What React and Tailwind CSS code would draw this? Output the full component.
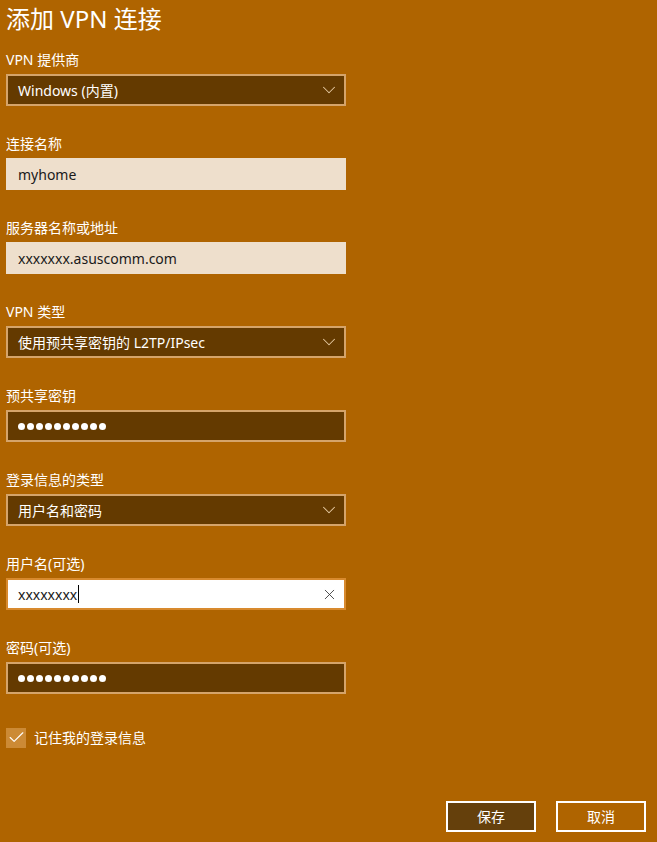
import { ChevronDown, X, Check } from 'lucide-react'

const FONT = { fontFamily: '"Noto Sans", "Noto Sans CJK SC", sans-serif' }

function Label({ children }) {
  return <div className="h-5 text-[14px] leading-5 text-white">{children}</div>
}

function Select({ value }) {
  return (
    <div className="mt-1 flex h-8 w-[340px] items-center justify-between border-2 border-[#d5a46a] bg-[#643a00] pl-[10px] pr-[4px] text-[14px] text-white">
      <span>{value}</span>
      <ChevronDown size={22} strokeWidth={1.1} className="text-[#e6c9a0]" />
    </div>
  )
}

function Light({ value }) {
  return (
    <div className="mt-1 flex h-8 w-[340px] items-center bg-[#eedfcc] px-3 text-[14px] text-[#1a1a1a]">
      {value}
    </div>
  )
}

function Dots() {
  return (
    <div className="mt-1 flex h-8 w-[340px] items-center gap-[2px] border-2 border-[#d5a46a] bg-[#643a00] pl-[10px]">
      {Array.from({ length: 10 }).map((_, i) => (
        <span key={i} className="h-[7px] w-[7px] rounded-full bg-white" />
      ))}
    </div>
  )
}

function Field({ label, children, first }) {
  return (
    <div className={first ? 'mt-3' : 'mt-7'}>
      <Label>{label}</Label>
      {children}
    </div>
  )
}

export default function App() {
  return (
    <div className="flex h-[842px] w-[657px] flex-col bg-[#af6400] px-[6px]" style={FONT}>
      <h1 className="h-[38px] text-[24px] leading-[38px] text-white">添加 VPN 连接</h1>

      <Field label="VPN 提供商" first>
        <Select value="Windows (内置)" />
      </Field>
      <Field label="连接名称">
        <Light value="myhome" />
      </Field>
      <Field label="服务器名称或地址">
        <Light value="xxxxxxx.asuscomm.com" />
      </Field>
      <Field label="VPN 类型">
        <Select value="使用预共享密钥的 L2TP/IPsec" />
      </Field>
      <Field label="预共享密钥">
        <Dots />
      </Field>
      <Field label="登录信息的类型">
        <Select value="用户名和密码" />
      </Field>
      <Field label="用户名(可选)">
        <div className="mt-1 flex h-8 w-[340px] items-center justify-between border-2 border-[#d88a2e] bg-white pl-[10px] pr-[6px] text-[14px] text-[#1a1a1a]">
          <span className="flex items-center">
            xxxxxxxx<span className="ml-[1px] h-[18px] w-px bg-black" />
          </span>
          <X size={17} strokeWidth={1.2} className="text-[#333]" />
        </div>
      </Field>
      <Field label="密码(可选)">
        <Dots />
      </Field>

      <div className="mt-[33px] flex items-center gap-[8px]">
        <div className="flex h-5 w-5 items-center justify-center bg-[#cc8a35]">
          <Check size={19} strokeWidth={1.4} className="text-white" />
        </div>
        <span className="text-[14px] text-white">记住我的登录信息</span>
      </div>

      <div className="mt-auto mb-[10px] flex justify-end gap-5 pr-[5px]">
        <button className="h-[31px] w-[90px] border-2 border-white bg-[#65400c] text-[14px] text-white">保存</button>
        <button className="h-[31px] w-[90px] border-2 border-white bg-[#af6400] text-[14px] text-white">取消</button>
      </div>
    </div>
  )
}
